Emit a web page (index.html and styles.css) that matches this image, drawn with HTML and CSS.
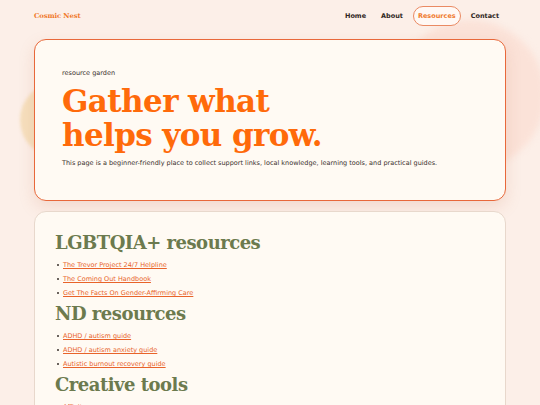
FILE: index.html
```html
<!DOCTYPE html>
<html lang="en">
<head>
<meta charset="utf-8">
<title>Cosmic Nest — Resources</title>
<link rel="stylesheet" href="styles.css">
</head>
<body>
<div class="blob blob-sun"></div>
<div class="blob blob-rose"></div>
<header class="site-header">
  <a class="logo" href="#">Cosmic Nest</a>
  <nav class="nav">
    <a href="#">Home</a>
    <a href="#">About</a>
    <a href="#" class="active">Resources</a>
    <a href="#">Contact</a>
  </nav>
</header>
<main class="page">
  <section class="hero card">
    <p class="eyebrow">resource garden</p>
    <h1 class="hero-title">Gather what<br>helps you grow.</h1>
    <p class="lede">This page is a beginner-friendly place to collect support links, local knowledge, learning tools, and practical guides.</p>
  </section>
  <section class="list-card card">
    <h2>LGBTQIA+ resources</h2>
    <ul>
      <li><a href="#">The Trevor Project 24/7 Helpline</a></li>
      <li><a href="#">The Coming Out Handbook</a></li>
      <li><a href="#">Get The Facts On Gender-Affirming Care</a></li>
    </ul>
    <h2>ND resources</h2>
    <ul>
      <li><a href="#">ADHD / autism guide</a></li>
      <li><a href="#">ADHD / autism anxiety guide</a></li>
      <li><a href="#">Autistic burnout recovery guide</a></li>
    </ul>
    <h2>Creative tools</h2>
    <ul>
      <li><a href="#">Affinity</a></li>
      <li><a href="#">Krita</a></li>
    </ul>
  </section>
</main>
</body>
</html>
```

FILE: styles.css
```css
* { box-sizing: border-box; }
html, body { margin: 0; padding: 0; }
body {
  background: #fcefe8;
  font-family: "DejaVu Sans", Verdana, sans-serif;
  color: #3a302c;
  position: relative;
  overflow: hidden;
  min-height: 405px;
}
.blob {
  position: absolute;
  border-radius: 50%;
  z-index: 0;
}
.blob-sun {
  left: 20px;
  top: 82px;
  width: 76px;
  height: 76px;
  background: #f6dfbd;
  filter: blur(1.5px);
}
.blob-rose {
  left: 395px;
  top: 20px;
  width: 150px;
  height: 150px;
  background: #fbe2d8;
  filter: blur(3px);
}
.site-header {
  position: relative;
  z-index: 1;
  display: flex;
  align-items: center;
  justify-content: space-between;
  height: 32px;
  padding: 0 36px 0 34px;
}
.logo {
  font-family: "DejaVu Serif", Georgia, serif;
  font-weight: 700;
  font-size: 6.8px;
  color: #f07a2c;
  text-decoration: none;
  letter-spacing: -0.1px;
}
.nav {
  display: flex;
  align-items: center;
  gap: 5px;
}
.nav a {
  font-size: 6.5px;
  font-weight: 700;
  color: #2f2622;
  text-decoration: none;
  padding: 5px 4px;
  border: 1px solid transparent;
  border-radius: 10px;
}
.nav a.active {
  color: #f07a2c;
  border-color: #ea8a63;
  background: #fff8f4;
}
.page {
  position: relative;
  z-index: 1;
  padding: 7px 34px 0;
  display: flex;
  flex-direction: column;
  gap: 10px;
}
.card {
  background: #fffaf3;
  border-radius: 12px;
}
.hero {
  height: 162px;
  border: 1.5px solid #e8683a;
  box-shadow: 0 6px 16px rgba(200, 120, 90, 0.18);
  padding: 29px 27px;
}
.eyebrow {
  margin: 0;
  font-size: 6.5px;
  color: #3a302c;
}
.hero-title {
  margin: 7px 0 7px;
  font-family: "DejaVu Serif", Georgia, serif;
  font-weight: 700;
  font-size: 31px;
  line-height: 34px;
  color: #ff6a0a;
  letter-spacing: -0.6px;
}
.lede {
  margin: 0;
  font-size: 6.5px;
  color: #3a302c;
}
.list-card {
  border: 1px solid #e8d8cc;
  padding: 18px 20px;
  height: 240px;
}
.list-card h2 {
  margin: 1px 0 0;
  font-family: "DejaVu Serif", Georgia, serif;
  font-weight: 700;
  font-size: 18px;
  line-height: 24px;
  color: #6c7a4e;
  letter-spacing: -0.5px;
}
.list-card ul {
  margin: 3px 0 2px;
  padding-left: 8px;
  list-style: none;
}
.list-card li {
  font-size: 6.5px;
  line-height: 14px;
  position: relative;
}
.list-card li::before {
  content: "";
  position: absolute;
  left: -6px;
  top: 6px;
  width: 2px;
  height: 2px;
  border-radius: 50%;
  background: #3a302c;
}
.list-card a {
  color: #e8632a;
  text-decoration: underline;
  text-underline-offset: 1px;
}
```
